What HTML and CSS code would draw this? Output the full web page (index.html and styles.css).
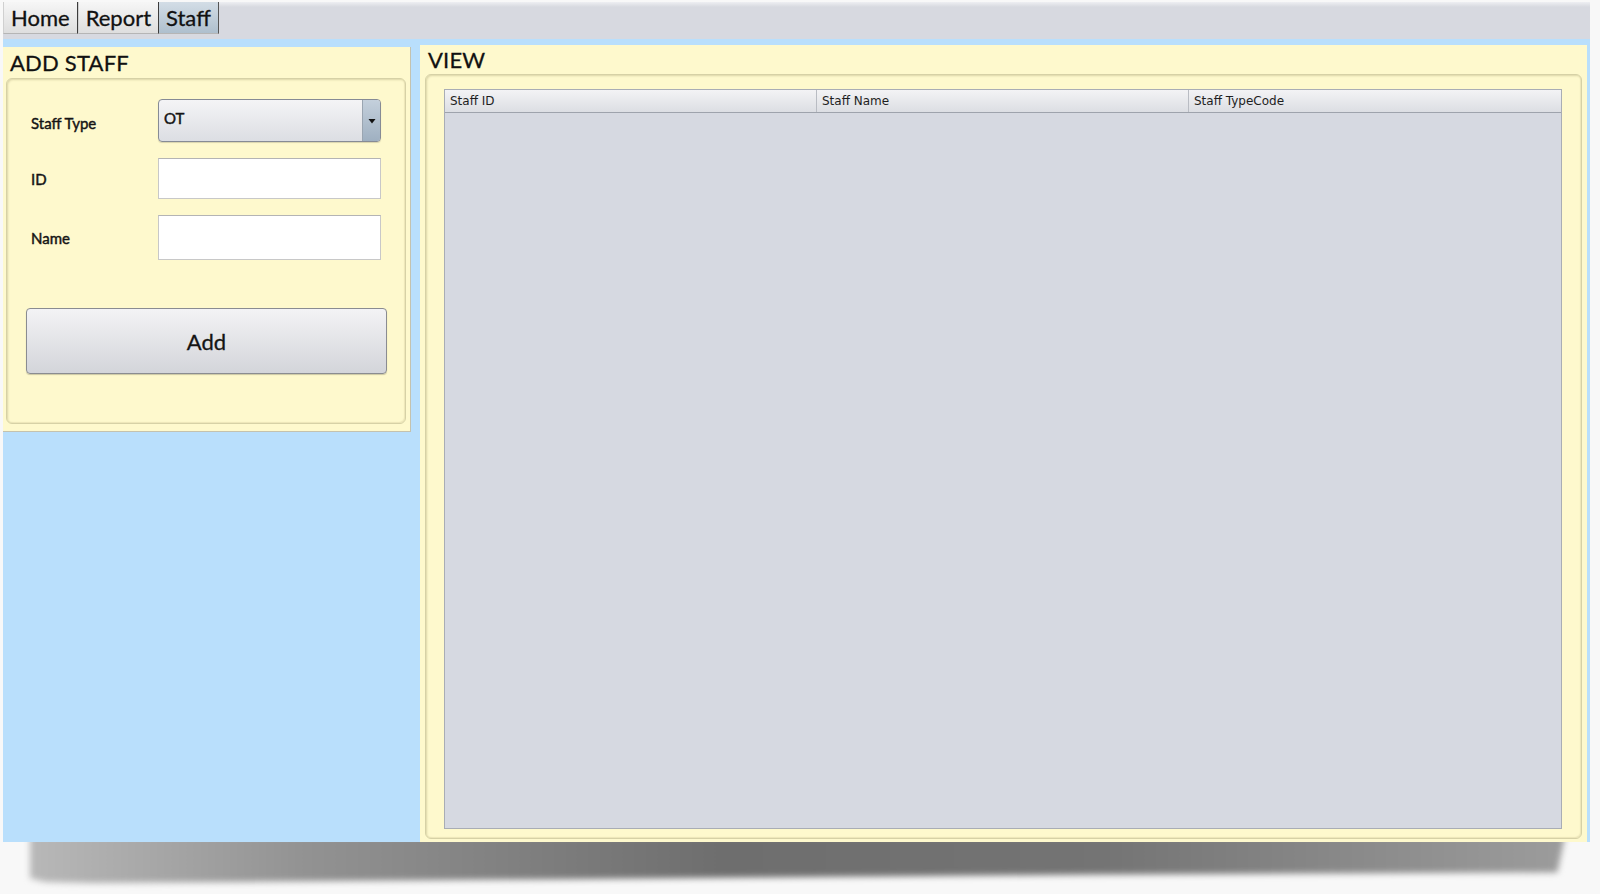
FILE: index.html
```html
<!DOCTYPE html>
<html>
<head>
<meta charset="utf-8">
<link rel="stylesheet" href="styles.css">
</head>
<body>
<div class="window">
  <div class="tabbar">
    <div class="tab">Home</div>
    <div class="tab">Report</div>
    <div class="tab active">Staff</div>
  </div>
  <div class="main">
    <section class="panel left-panel">
      <h2 class="panel-title">ADD STAFF</h2>
      <div class="group form-group">
        <div class="form-grid">
          <label class="lbl">Staff Type</label>
          <div class="select">
            <span class="select-value">OT</span>
            <span class="select-arrow"><svg width="8" height="6" viewBox="0 0 8 6"><path d="M0.5 1h7L4 5.5z" fill="#111"/></svg></span>
          </div>
          <label class="lbl">ID</label>
          <div class="input"></div>
          <label class="lbl">Name</label>
          <div class="input tall"></div>
        </div>
        <button class="add-btn">Add</button>
      </div>
    </section>
    <section class="panel right-panel">
      <h2 class="panel-title view-title">VIEW</h2>
      <div class="group table-group">
        <div class="table">
          <div class="thead">
            <div class="th">Staff ID</div>
            <div class="th">Staff Name</div>
            <div class="th">Staff TypeCode</div>
          </div>
          <div class="tbody"></div>
        </div>
      </div>
    </section>
  </div>
</div>
<div class="shadow"></div>
</body>
</html>
```

FILE: styles.css
```css
* { box-sizing: border-box; }
html, body {
  margin: 0;
  width: 1600px;
  height: 894px;
  overflow: hidden;
  background: #f8f8f8;
  font-family: Lato, "Open Sans", sans-serif;
  color: #141414;
}
body { position: relative; padding-top: 2px; }

.window {
  position: relative;
  z-index: 1;
  margin-left: 3px;
  width: 1587px;
}

.tabbar {
  height: 37px;
  background: linear-gradient(#eeeff2 0, #d7d9e0 5px, #d7d9e0 100%);
  display: flex;
  align-items: flex-start;
}
.tab {
  height: 32px;
  padding: 0 7px;
  font-size: 22px;
  line-height: 32px;
  color: #111;
  -webkit-text-stroke: 0.3px #111;
  background: linear-gradient(#f6f6f6, #dedede);
  border-right: 1px solid #3c3c3c;
  border-bottom: 1px solid #b5b5b5;
  border-left: 1px solid #d0d0d0;
}
.tab.active {
  background: linear-gradient(#d3dde6, #aebfcd);
  border-left: none;
  border-right-color: #555;
}

.main {
  height: 803px;
  background: #b9dffc;
  display: flex;
  align-items: flex-start;
  padding-right: 3px;
}

.panel {
  background: #fef9cd;
  display: flex;
  flex-direction: column;
}
.panel-title {
  margin: 0;
  font-size: 22px;
  font-weight: 400;
  letter-spacing: 0.2px;
  color: #111;
  -webkit-text-stroke: 0.3px #111;
}

.left-panel {
  width: 408px;
  height: 385px;
  margin-top: 8px;
  padding: 0 4px 7px 3px;
  border-right: 1px solid #c4c2ae;
  border-bottom: 1px solid #c4c2ae;
}
.left-panel .panel-title {
  height: 31px;
  line-height: 31px;
  padding-left: 4px;
}

.right-panel {
  width: 1167px;
  height: 797px;
  margin-left: 9px;
  margin-top: 6px;
  padding: 0 5px 3px 5px;
}
.view-title {
  height: 29px;
  line-height: 29px;
  padding-left: 3px;
}

.group {
  flex: 1;
  border: 1px solid #d6d1a6;
  border-radius: 6px;
  box-shadow: inset 1px 1px 2px rgba(120, 110, 60, 0.25), inset -1px -1px 1px rgba(120, 110, 60, 0.12);
}

.form-group {
  padding: 20px 0 0 19px;
  display: flex;
  flex-direction: column;
}
.form-grid {
  display: grid;
  grid-template-columns: 127px 223px;
  grid-template-rows: 43px 41px 45px;
  row-gap: 16px;
  align-items: center;
  padding-left: 5px;
}
.lbl {
  font-size: 15px;
  color: #151515;
  font-weight: 400;
  -webkit-text-stroke: 0.45px #151515;
}
.lbl:first-child { padding-top: 5px; }

.select {
  height: 43px;
  border: 1px solid #868b95;
  border-radius: 4px;
  background: linear-gradient(#f4f4f6, #dcdee3);
  display: flex;
  overflow: hidden;
  box-shadow: 0 1px 1px rgba(0,0,0,0.15);
}
.select-value {
  flex: 1;
  font-size: 15px;
  padding-left: 5px;
  padding-top: 9px;
  -webkit-text-stroke: 0.45px #151515;
}
.select-arrow {
  width: 18px;
  background: linear-gradient(#c4d0dc, #9fb0c1);
  border-left: 1px solid #9aa5b1;
  display: flex;
  align-items: center;
  justify-content: center;
}

.input {
  height: 41px;
  background: #fff;
  border: 1px solid #c8c8c8;
  border-top-color: #b4b4b4;
}
.input.tall { height: 45px; }

.add-btn {
  margin-top: 48px;
  width: 361px;
  height: 66px;
  border: 1px solid #8a8c91;
  border-radius: 4px;
  background: linear-gradient(#f3f3f5, #d3d5da);
  box-shadow: 0 1px 1px rgba(0,0,0,0.2);
  font-family: Lato, "Open Sans", sans-serif;
  font-size: 22px;
  color: #141414;
  -webkit-text-stroke: 0.3px #141414;
  padding: 0;
}

.table-group {
  padding: 14px 19px 9px 18px;
  display: flex;
}
.table {
  flex: 1;
  display: flex;
  flex-direction: column;
  border: 1px solid #a9adb5;
  background: #d6d9e1;
}
.thead {
  height: 23px;
  display: grid;
  grid-template-columns: 1fr 1fr 1fr;
  background: linear-gradient(#f3f3f5, #dcdee3);
  border-bottom: 1px solid #9ea3ac;
}
.th {
  font-family: "DejaVu Sans", sans-serif;
  font-size: 12px;
  line-height: 22px;
  padding-left: 5px;
  color: #1e1e1e;
  border-right: 1px solid #b9bcc3;
}
.th:last-child { border-right: none; }
.tbody { flex: 1; }

.shadow {
  position: absolute;
  left: 30px;
  top: 836px;
  width: 1535px;
  height: 48px;
  filter: blur(3px);
}
.shadow::before {
  content: "";
  position: absolute;
  inset: 0;
  background: linear-gradient(to right, #b8b8b8 0%, #929292 18%, #6e6e6e 45%, #747474 70%, #9c9c9c 100%);
  clip-path: polygon(0 0, 100% 0, 99.5% 76%, 70% 80%, 35% 90%, 4% 98%, 1% 96%, 0 88%);
}
```
